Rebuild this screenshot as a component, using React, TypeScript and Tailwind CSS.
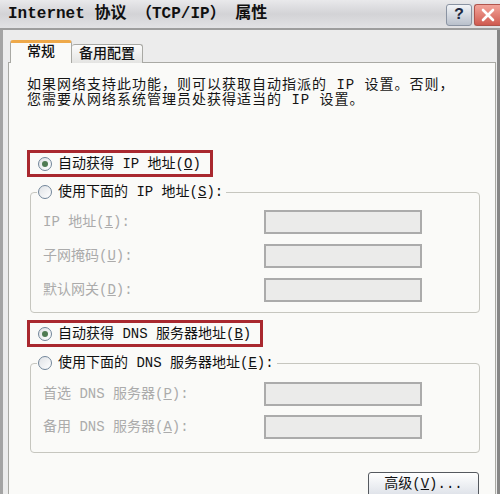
import type { ReactNode } from 'react';

const mono = "font-['Liberation_Mono','Noto_Sans_CJK_SC',monospace]";

function Radio({ checked = false }: { checked?: boolean }) {
    return (
        <span className="flex h-[14px] w-[14px] shrink-0 items-center justify-center rounded-full border border-[#72869a] bg-gradient-to-br from-[#dfe2e6] to-white">
            {checked && <span className="h-[6px] w-[6px] rounded-full bg-[#4f7a52]" />}
        </span>
    );
}

// label text followed by "(X)" with the access key underlined
function Mnemonic({ text, hotkey, tail = '' }: { text: string; hotkey: string; tail?: string }) {
    return (
        <>
            {text}(<span className="underline">{hotkey}</span>){tail}
        </>
    );
}

function RadioRow({ checked, children }: { checked?: boolean; children: ReactNode }) {
    return (
        <span className="flex h-[16px] items-center gap-[6px] text-[14px] leading-[16px] text-[#111]">
            <Radio checked={checked} />
            <span className="whitespace-pre">{children}</span>
        </span>
    );
}

function Highlight({ children }: { children: ReactNode }) {
    return (
        <div className="flex h-[27px] w-fit items-center border-[3px] border-[#a9282f] pl-[8px] pr-[9px]">
            {children}
        </div>
    );
}

function Field({ label }: { label: ReactNode }) {
    return (
        <div className="flex h-[24px] items-center">
            <span className="flex-1 whitespace-pre text-[14px] leading-[16px] text-[#ababab]">{label}</span>
            <span className="h-[24px] w-[158px] border-2 border-[#ababab] bg-[#ebebea]" />
        </div>
    );
}

function GroupBox({ legend, gap, children }: { legend: ReactNode; gap: string; children: ReactNode }) {
    return (
        <fieldset className="ml-[3px] rounded-[4px] border border-[#c6c6bf] pl-[6px] pr-[57px]">
            <legend className="pl-[1px] pr-[3px]">{legend}</legend>
            <div className={`flex flex-col pl-[6px] ${gap}`}>{children}</div>
        </fieldset>
    );
}

export default function App() {
    return (
        <div className={`flex h-[494px] w-[500px] flex-col overflow-hidden bg-[#ececec] ${mono}`}>
            {/* title bar */}
            <div className="flex h-[30px] shrink-0 items-center justify-between border-b-2 border-[#9d9d9d] bg-gradient-to-b from-[#e9e9eb] via-[#d3d3d6] to-[#e2e2e4] pl-[8px]">
                <span className="whitespace-pre text-[16px] font-bold leading-[18px] text-[#101010]">
                    Internet 协议 （TCP/IP） 属性
                </span>
                <div className="flex items-center gap-[2px] self-start pt-[4px]">
                    <span className="flex h-[22px] w-[26px] items-center justify-center rounded-[3px] border border-[#8a93a2] bg-gradient-to-b from-[#f2f4f7] to-[#b9c0cb] text-[16px] font-bold leading-none text-[#1d2940]">
                        ?
                    </span>
                    <span className="flex h-[22px] w-[26px] items-center justify-center rounded-l-[3px] border border-r-0 border-[#b0544c] bg-gradient-to-b from-[#f2a49a] to-[#cf5a50]">
                        <svg width="14" height="14" viewBox="0 0 14 14">
                            <path d="M2 2L12 12M12 2L2 12" stroke="#fff" strokeWidth="2.6" strokeLinecap="round" />
                        </svg>
                    </span>
                </div>
            </div>

            <div className="flex flex-1 border-l-[3px] border-r-[3px] border-l-[#a4a4a4] border-r-[#868686] pl-[5px] pr-[1px]">
                <div className="flex flex-1 flex-col pt-[10px]">
                    {/* tabs */}
                    <div className="relative z-10 -mb-px ml-[2px] flex items-end">
                        <div className="flex h-[23px] w-[62px] items-center justify-center rounded-t-[3px] border border-b-0 border-[#a9a9a4] border-t-[3px] border-t-[#eea94a] bg-[#fafaf8] pb-[2px] text-[14px] font-medium text-[#111]">
                            常规
                        </div>
                        <div className="flex h-[19px] w-[71px] items-center justify-center rounded-t-[3px] border border-b-0 border-l-0 border-[#a9a9a4] bg-gradient-to-b from-[#fbfbfb] to-[#e4e4e2] text-[14px] font-medium text-[#111]">
                            备用配置
                        </div>
                    </div>

                    {/* page */}
                    <div className="flex flex-1 flex-col border border-[#a9a9a4] bg-[#fafaf8] pl-[18px] pr-[15px] pt-[15px]">
                        <p className="text-[14px] leading-[15px] tracking-[1px] text-[#151515]">
                            如果网络支持此功能，则可以获取自动指派的 IP 设置。否则，
                            <br />
                            您需要从网络系统管理员处获得适当的 IP 设置。
                        </p>

                        <div className="mt-[42px]">
                            <Highlight>
                                <RadioRow checked>
                                    <Mnemonic text="自动获得 IP 地址" hotkey="O" />
                                </RadioRow>
                            </Highlight>
                        </div>

                        <div className="mt-[7px]">
                            <GroupBox
                                gap="gap-[10px] pt-[10px] pb-[10px]"
                                legend={
                                    <RadioRow>
                                        <Mnemonic text="使用下面的 IP 地址" hotkey="S" tail=":" />
                                    </RadioRow>
                                }
                            >
                                <Field label={<Mnemonic text="IP 地址" hotkey="I" tail=":" />} />
                                <Field label={<Mnemonic text="子网掩码" hotkey="U" tail=":" />} />
                                <Field label={<Mnemonic text="默认网关" hotkey="D" tail=":" />} />
                            </GroupBox>
                        </div>

                        <div className="mt-[7px]">
                            <Highlight>
                                <RadioRow checked>
                                    <Mnemonic text="自动获得 DNS 服务器地址" hotkey="B" />
                                </RadioRow>
                            </Highlight>
                        </div>

                        <div className="mt-[8px]">
                            <GroupBox
                                gap="gap-[9px] pt-[11px] pb-[13px]"
                                legend={
                                    <RadioRow>
                                        <Mnemonic text="使用下面的 DNS 服务器地址" hotkey="E" tail=":" />
                                    </RadioRow>
                                }
                            >
                                <Field label={<Mnemonic text="首选 DNS 服务器" hotkey="P" tail=":" />} />
                                <Field label={<Mnemonic text="备用 DNS 服务器" hotkey="A" tail=":" />} />
                            </GroupBox>
                        </div>

                        <div className="mt-[19px] flex justify-end">
                            <button className="mr-[1px] flex h-[25px] w-[111px] items-center justify-center rounded-[3px] border border-[#55595f] bg-gradient-to-b from-white to-[#dde1e8] text-[14px] text-[#111]">
                                <Mnemonic text="高级" hotkey="V" tail="..." />
                            </button>
                        </div>
                    </div>
                </div>
            </div>
        </div>
    );
}
